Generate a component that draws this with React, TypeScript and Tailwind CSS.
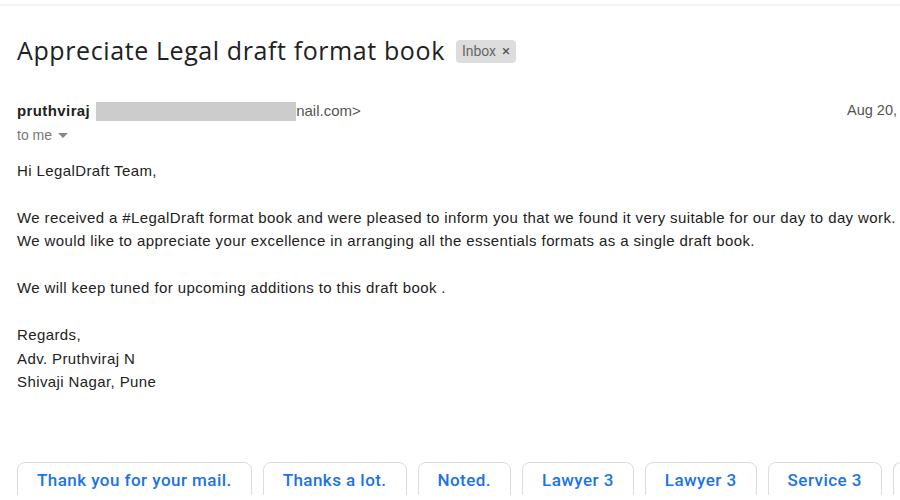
export default function App() {
  const replies = ['Thank you for your mail.', 'Thanks a lot.', 'Noted.', 'Lawyer 3', 'Lawyer 3', 'Service 3'];

  return (
    <div className="w-[900px] h-[500px] bg-white overflow-hidden font-['Liberation_Sans',Arial,sans-serif]">
      <div className="h-[6px] border-b-2 border-[#f3f3f3]" />

      {/* Subject */}
      <div className="flex items-center pl-[17px] pt-[27px]">
        <h1 className="text-[25px] leading-[34px] text-[#202124] font-['Open_Sans',sans-serif] tracking-[0.6px]">
          Appreciate Legal draft format book
        </h1>
        <span className="ml-[11px] mt-[2px] flex items-center gap-[6px] h-[23px] px-[6px] rounded-[4px] bg-[#dddddd] text-[#666666] text-[14px] font-['Roboto',sans-serif]">
          Inbox <span className="text-[15px] leading-none text-[#555]">×</span>
        </span>
      </div>

      {/* Sender */}
      <div className="flex items-center pl-[17px] pt-[33px] whitespace-nowrap">
        <span className="text-[15px] font-bold tracking-[0.4px] text-[#222]">pruthviraj</span>
        <span className="ml-[6px] w-[200px] h-[19px] bg-[#cccccc]" />
        <span className="text-[15px] text-[#555]">nail.com&gt;</span>
        <span className="ml-auto pr-[3px] text-[14.5px] text-[#555]">Aug 20,</span>
      </div>
      <div className="flex items-center gap-[6px] pl-[17px] mt-[2px] text-[14px] text-[#777]">
        to me
        <svg width="10" height="5" viewBox="0 0 10 5" className="mt-[1px]">
          <path d="M0 0h10L5 5z" fill="#888" />
        </svg>
      </div>

      {/* Body */}
      <div className="pl-[17px] mt-[13px] text-[15px] tracking-[0.4px] leading-[23.5px] text-[#222] whitespace-nowrap">
        <p>Hi LegalDraft Team,</p>
        <br />
        <p>We received a #LegalDraft format book and were pleased to inform you that we found it very suitable for our day to day work.</p>
        <p>We would like to appreciate your excellence in arranging all the essentials formats as a single draft book.</p>
        <br />
        <p>We will keep tuned for upcoming additions to this draft book .</p>
        <br />
        <p>Regards,</p>
        <p>Adv. Pruthviraj N</p>
        <p>Shivaji Nagar, Pune</p>
      </div>

      {/* Smart replies */}
      <div className="mt-[68px] h-[33px] overflow-hidden pl-[17px] flex gap-[11px] whitespace-nowrap">
        {replies.map((r, i) => (
          <div
            key={i}
            className="shrink-0 h-[40px] px-[19px] pt-[5px] rounded-[8px] border border-[#dadce0] text-[17px] tracking-[0.45px] font-medium text-[#1a73e8] font-['Roboto',sans-serif]"
          >
            {r}
          </div>
        ))}
        <div className="shrink-0 w-[20px] h-[40px] rounded-l-[8px] border border-r-0 border-[#dadce0]" />
      </div>
    </div>
  );
}
